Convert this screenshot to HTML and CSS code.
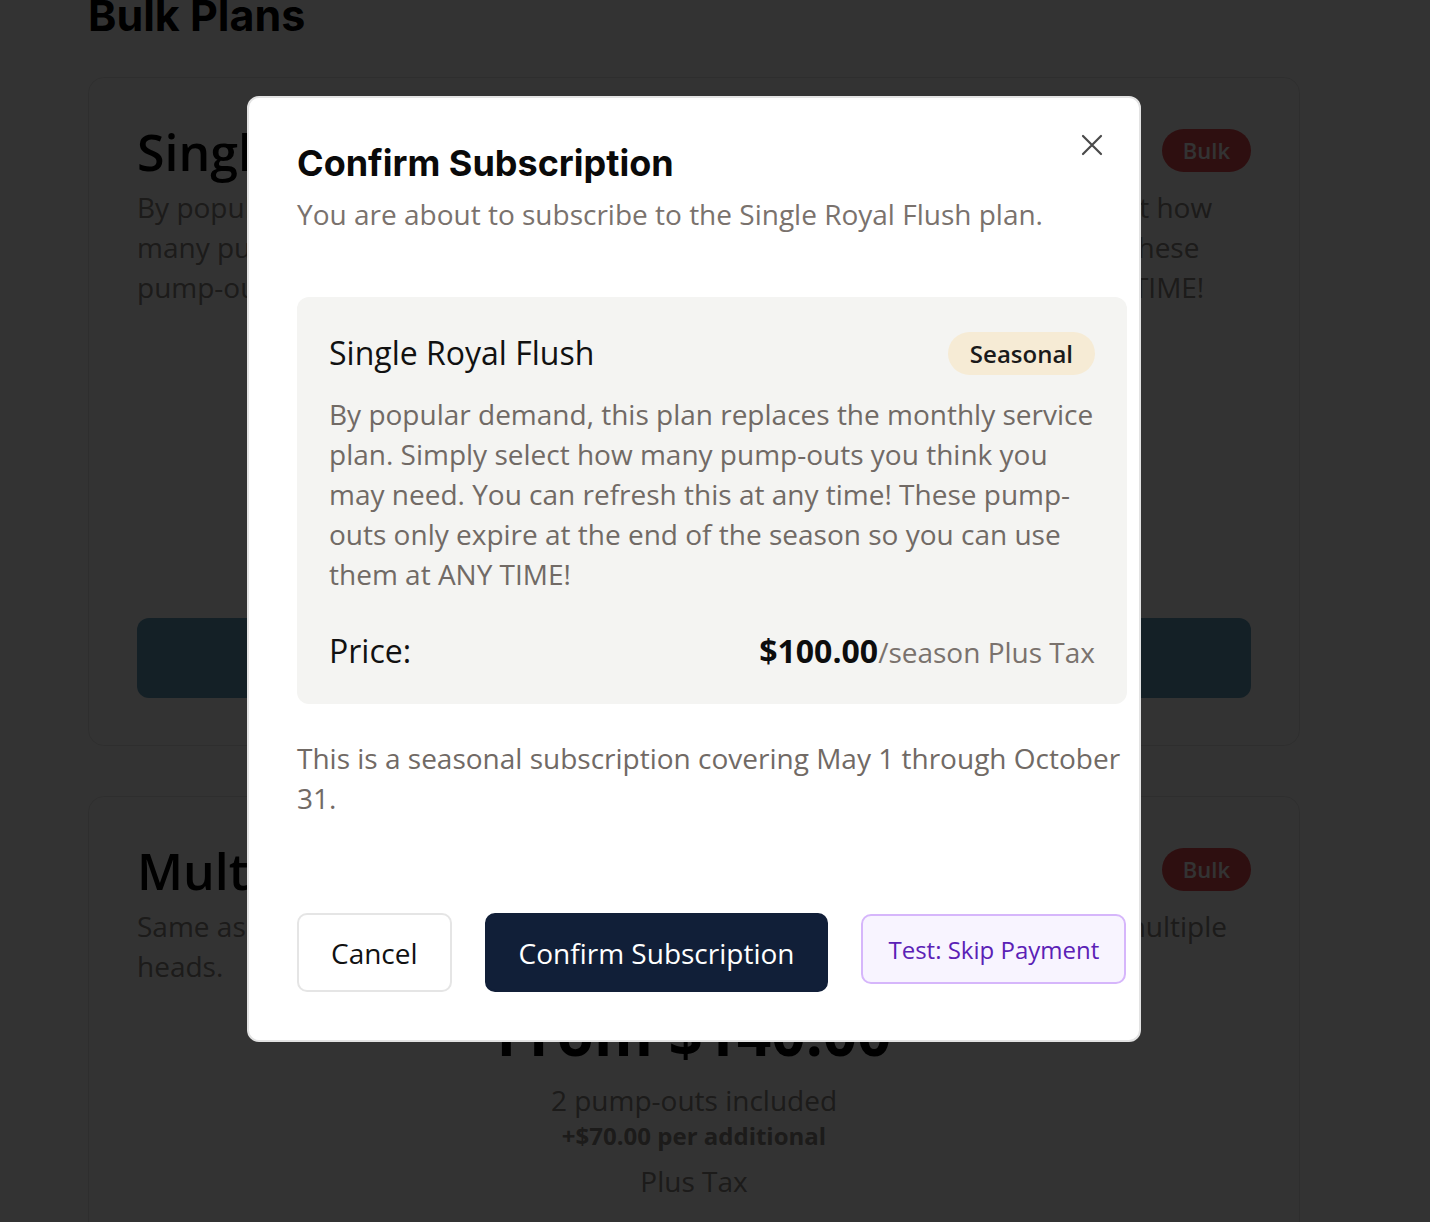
FILE: index.html
```html
<!DOCTYPE html>
<html lang="en">
<head>
<meta charset="utf-8">
<title>Bulk Plans</title>
<link rel="stylesheet" href="styles.css">
</head>
<body>
<div class="page">
  <h1 class="page-title">Bulk Plans</h1>
  <div class="plans">
    <section class="plan-card">
      <div class="plan-head">
        <h2 class="plan-name">Single Royal Flush</h2>
        <span class="badge-bulk">Bulk</span>
      </div>
      <p class="plan-desc">By popular demand, this plan replaces the monthly service plan. Simply select how many pump-outs you think you may need. You can refresh this at any time! These pump-outs only expire at the end of the season so you can use them at ANY TIME!</p>
      <div class="plan-price">
        <div class="price-big">From $100.00</div>
        <div class="price-inc">1 pump-out included</div>
        <div class="price-add">+$70.00 per additional</div>
        <div class="price-tax">Plus Tax</div>
      </div>
      <button class="plan-btn">Select Plan</button>
    </section>
    <section class="plan-card">
      <div class="plan-head">
        <h2 class="plan-name">Multi-Head Royal Flush</h2>
        <span class="badge-bulk">Bulk</span>
      </div>
      <p class="plan-desc">Same as the Single Royal Flush plan, but built for the larger boats that have multiple heads.</p>
      <div class="plan-price">
        <div class="price-big">From $140.00</div>
        <div class="price-inc">2 pump-outs included</div>
        <div class="price-add">+$70.00 per additional</div>
        <div class="price-tax">Plus Tax</div>
      </div>
      <button class="plan-btn">Select Plan</button>
    </section>
  </div>
</div>

<div class="overlay">
  <div class="modal" role="dialog" aria-labelledby="modal-title">
    <button class="close" aria-label="Close">
      <svg viewBox="0 0 24 24" width="24" height="24" aria-hidden="true">
        <path d="M3 3 L21 21 M21 3 L3 21" stroke="#4a4a4a" stroke-width="2.2" stroke-linecap="round" fill="none"/>
      </svg>
    </button>
    <h2 class="modal-title" id="modal-title">Confirm Subscription</h2>
    <p class="modal-sub">You are about to subscribe to the Single Royal Flush plan.</p>

    <div class="summary">
      <div class="summary-head">
        <h3 class="summary-name">Single Royal Flush</h3>
        <span class="badge-seasonal">Seasonal</span>
      </div>
      <p class="summary-desc">By popular demand, this plan replaces the monthly service plan. Simply select how many pump-outs you think you may need. You can refresh this at any time! These pump-outs only expire at the end of the season so you can use them at ANY TIME!</p>
      <div class="summary-price">
        <span class="price-label">Price:</span>
        <span class="price-value"><strong>$100.00</strong><span class="per">/season Plus Tax</span></span>
      </div>
    </div>

    <p class="note">This is a seasonal subscription covering May 1 through October 31.</p>

    <div class="actions">
      <button class="btn btn-cancel">Cancel</button>
      <button class="btn btn-confirm">Confirm Subscription</button>
      <button class="btn btn-test">Test: Skip Payment</button>
    </div>
  </div>
</div>
</body>
</html>
```

FILE: styles.css
```css
* { box-sizing: border-box; }

html, body {
  margin: 0;
  padding: 0;
  background: #ffffff;
  height: 100%;
  overflow: hidden;
}

body {
  font-family: "Open Sans", "Noto Sans", "Liberation Sans", sans-serif;
  color: #111;
}

/* ---------- background page ---------- */
.page {
  margin-top: -9px;
  padding: 0 130px 0 88px;
}

.page-title {
  font-family: Inter, "Liberation Sans", sans-serif;
  font-weight: 700;
  font-size: 43px;
  line-height: 48px;
  margin: 0 0 38px;
  color: #000;
}

.plans {
  display: flex;
  flex-direction: column;
  gap: 50px;
}

.plan-card {
  border: 1px solid #e6e6e6;
  border-radius: 16px;
  padding: 44px 48px 47px;
  background: #fff;
}

.plan-head {
  display: flex;
  justify-content: space-between;
  align-items: center;
  height: 60px;
}

.plan-name {
  margin: 0;
  font-size: 50px;
  line-height: 60px;
  font-weight: 600;
  color: #000;
}

.badge-bulk {
  margin-top: -3px;
  background: #e54a4f;
  color: #fff;
  font-weight: 600;
  font-size: 22px;
  line-height: 43px;
  height: 43px;
  padding: 0 21px;
  border-radius: 22px;
}

.plan-desc {
  margin: 5px 0 0;
  font-size: 28px;
  line-height: 40px;
  color: #8a8580;
}

.plan-price {
  margin-top: 9px;
  text-align: center;
}

.price-big {
  font-size: 60px;
  line-height: 77px;
  font-weight: 700;
  color: #000;
}

.price-inc {
  margin-top: 8px;
  font-size: 28px;
  line-height: 40px;
  color: #8a8580;
}

.price-add {
  font-size: 24px;
  line-height: 32px;
  font-weight: 700;
  color: #8a8580;
}

.price-tax {
  margin-top: 11px;
  font-size: 28px;
  line-height: 36px;
  color: #8a8580;
}

.plan-btn {
  display: block;
  width: 100%;
  height: 80px;
  margin-top: 98px;
  border: 0;
  border-radius: 12px;
  background: #64a0be;
  color: #fff;
  font-family: inherit;
  font-size: 28px;
  font-weight: 600;
}

/* ---------- overlay + modal ---------- */
.overlay {
  position: fixed;
  inset: 0;
  background: rgba(0, 0, 0, 0.8);
  display: flex;
  justify-content: center;
  align-items: flex-start;
  padding: 96px 42px 0 0;
}

.modal {
  position: relative;
  width: 894px;
  background: #fff;
  border: 2px solid #e3e3e3;
  border-radius: 12px;
  padding: 43px 12px 48px 48px;
}

.close {
  position: absolute;
  top: 35px;
  right: 35px;
  width: 24px;
  height: 24px;
  padding: 0;
  border: 0;
  background: transparent;
  display: flex;
}

.modal-title {
  margin: 0;
  font-family: Inter, "Liberation Sans", sans-serif;
  font-weight: 700;
  font-size: 36px;
  line-height: 44px;
  color: #0a0a0a;
}

.modal-sub {
  margin: 9px 0 0;
  font-size: 28px;
  line-height: 40px;
  color: #7a726d;
}

.summary {
  margin-top: 63px;
  background: #f4f4f2;
  border-radius: 12px;
  padding: 32px;
}

.summary-head {
  display: flex;
  justify-content: space-between;
  align-items: center;
  height: 48px;
}

.summary-name {
  margin: 0;
  font-size: 32px;
  line-height: 40px;
  font-weight: 500;
  color: #111;
}

.badge-seasonal {
  background: #f6ebd5;
  color: #1a1a1a;
  font-weight: 600;
  font-size: 24px;
  height: 43px;
  line-height: 43px;
  padding: 0 22px;
  border-radius: 22px;
}

.summary-desc {
  margin: 17px 0 0;
  font-size: 28px;
  line-height: 40px;
  color: #716a65;
}

.summary-price {
  margin-top: 34px;
  height: 44px;
  display: flex;
  justify-content: space-between;
  align-items: center;
}

.price-label {
  font-size: 32px;
  color: #111;
}

.price-value strong {
  font-size: 32px;
  font-weight: 700;
  color: #0d0d0d;
}

.price-value .per {
  font-size: 28px;
  color: #7a726d;
}

.note {
  margin: 34px 0 0;
  font-size: 28px;
  line-height: 40px;
  color: #716a65;
}

.actions {
  margin-top: 95px;
  display: flex;
  align-items: flex-start;
  gap: 33px;
}

.btn {
  font-family: inherit;
  border-radius: 10px;
  cursor: pointer;
  white-space: nowrap;
  flex-shrink: 0;
}

.btn-cancel {
  height: 79px;
  padding: 0 32px;
  background: #fff;
  border: 2px solid #e5e5e5;
  color: #111;
  font-size: 28px;
}

.btn-confirm {
  height: 79px;
  padding: 0 32px;
  background: #111f38;
  border: 2px solid #111f38;
  color: #fff;
  font-size: 28px;
}

.btn-test {
  margin-top: 1px;
  height: 70px;
  padding: 0 25px;
  background: #f8f4ff;
  border: 2px solid #d6b6fb;
  color: #5b21b6;
  font-size: 24px;
}
```
